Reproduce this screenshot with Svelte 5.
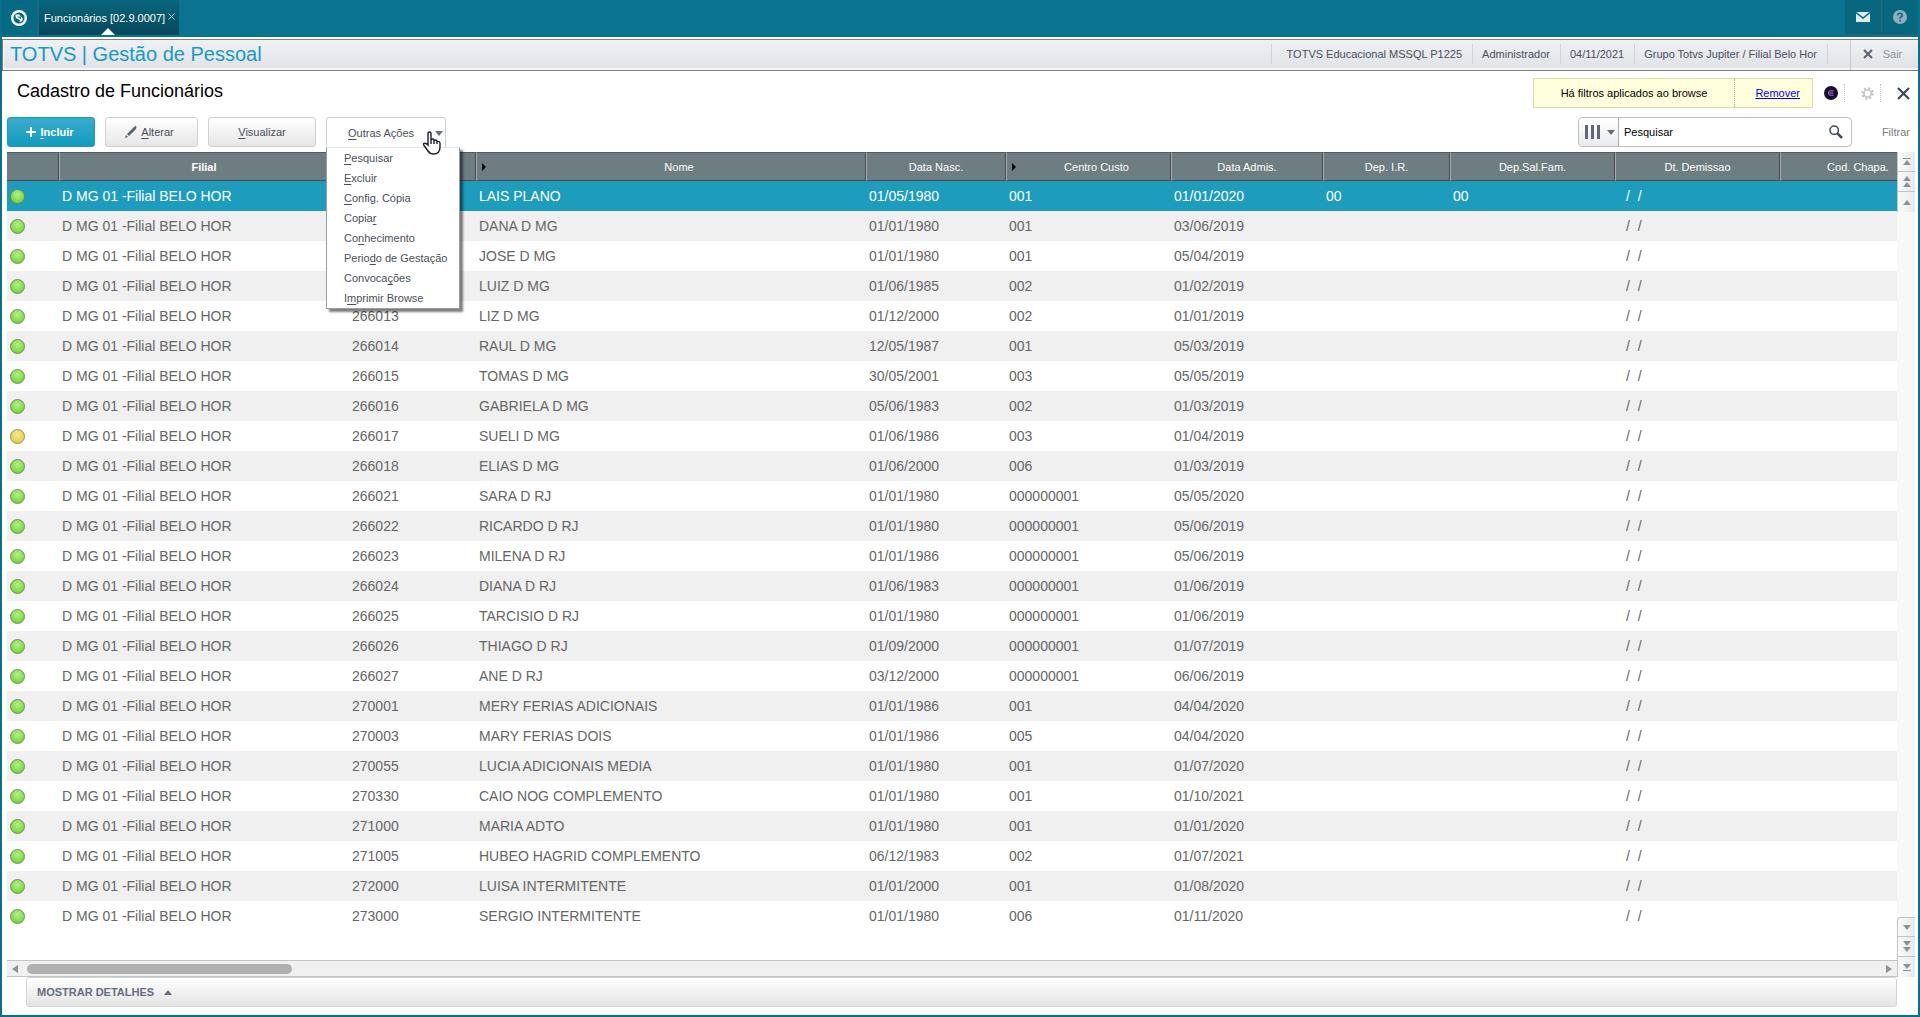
<script>
  const columns = [
    { label: '', key: 'status', width: 52 },
    { label: 'Filial', key: 'filial', width: 290, bold: true },
    { label: '', key: 'matricula', width: 127, mark: true },
    { label: 'Nome', key: 'nome', width: 390, mark: true },
    { label: 'Data Nasc.', key: 'nasc', width: 140 },
    { label: 'Centro Custo', key: 'custo', width: 165, mark: true },
    { label: 'Data Admis.', key: 'admis', width: 152 },
    { label: 'Dep. I.R.', key: 'ir', width: 127 },
    { label: 'Dep.Sal.Fam.', key: 'fam', width: 165 },
    { label: 'Dt. Demissao', key: 'demissao', width: 165 },
    { label: 'Cod. Chapa.', key: 'chapa', width: 117 }
  ];

  const rows = [
    ['', 'LAIS PLANO', '01/05/1980', '001', '01/01/2020', '00', '00'],
    ['', 'DANA D MG', '01/01/1980', '001', '03/06/2019'],
    ['', 'JOSE D MG', '01/01/1980', '001', '05/04/2019'],
    ['', 'LUIZ D MG', '01/06/1985', '002', '01/02/2019'],
    ['266013', 'LIZ D MG', '01/12/2000', '002', '01/01/2019'],
    ['266014', 'RAUL D MG', '12/05/1987', '001', '05/03/2019'],
    ['266015', 'TOMAS D MG', '30/05/2001', '003', '05/05/2019'],
    ['266016', 'GABRIELA D MG', '05/06/1983', '002', '01/03/2019'],
    ['266017', 'SUELI D MG', '01/06/1986', '003', '01/04/2019'],
    ['266018', 'ELIAS D MG', '01/06/2000', '006', '01/03/2019'],
    ['266021', 'SARA D RJ', '01/01/1980', '000000001', '05/05/2020'],
    ['266022', 'RICARDO D RJ', '01/01/1980', '000000001', '05/06/2019'],
    ['266023', 'MILENA D RJ', '01/01/1986', '000000001', '05/06/2019'],
    ['266024', 'DIANA D RJ', '01/06/1983', '000000001', '01/06/2019'],
    ['266025', 'TARCISIO D RJ', '01/01/1980', '000000001', '01/06/2019'],
    ['266026', 'THIAGO D RJ', '01/09/2000', '000000001', '01/07/2019'],
    ['266027', 'ANE D RJ', '03/12/2000', '000000001', '06/06/2019'],
    ['270001', 'MERY FERIAS ADICIONAIS', '01/01/1986', '001', '04/04/2020'],
    ['270003', 'MARY FERIAS DOIS', '01/01/1986', '005', '04/04/2020'],
    ['270055', 'LUCIA ADICIONAIS MEDIA', '01/01/1980', '001', '01/07/2020'],
    ['270330', 'CAIO NOG COMPLEMENTO', '01/01/1980', '001', '01/10/2021'],
    ['271000', 'MARIA ADTO', '01/01/1980', '001', '01/01/2020'],
    ['271005', 'HUBEO HAGRID COMPLEMENTO', '06/12/1983', '002', '01/07/2021'],
    ['272000', 'LUISA INTERMITENTE', '01/01/2000', '001', '01/08/2020'],
    ['273000', 'SERGIO INTERMITENTE', '01/01/1980', '006', '01/11/2020']
  ].map(([matricula, nome, nasc, custo, admis, ir = '', fam = '']) => ({
    filial: 'D MG 01 -Filial BELO HOR',
    matricula, nome, nasc, custo, admis, ir, fam,
    demissao: '/  /',
    chapa: '',
    away: matricula === '266017'
  }));

  // text before the shortcut letter, the letter, text after it
  const actions = [
    ['', 'P', 'esquisar'],
    ['', 'E', 'xcluir'],
    ['', 'C', 'onfig. Cópia'],
    ['Copia', 'r', ''],
    ['Co', 'n', 'hecimento'],
    ['Perio', 'd', 'o de Gestação'],
    ['Convoca', 'ç', 'ões'],
    ['I', 'm', 'primir Browse']
  ];

  const session = ['TOTVS Educacional MSSQL P1225', 'Administrador', '04/11/2021', 'Grupo Totvs Jupiter / Filial Belo Hor'];

  let selected = $state(0);
  let menuOpen = $state(true);
</script>

<div class="app">
  <header class="topbar">
    <button class="home" aria-label="Início">
      <svg width="16" height="16" viewBox="0 0 16 16">
        <circle cx="8" cy="8" r="6.8" fill="none" stroke="#fff" stroke-width="2.4" />
        <path d="M4.4 4.6 L8 4.4 L11.8 8.6 L11.4 11 L8.6 12.2 L8.8 10 L4.8 8 Z" fill="#fff" />
        <path d="M6.6 7 L9.4 7.2 L9.2 8.8" fill="none" stroke="#05687f" stroke-width="1.2" />
      </svg>
    </button>
    <div class="tab">
      <span>Funcionários [02.9.0007]</span>
      <button aria-label="Fechar aba">
        <svg width="7" height="7" viewBox="0 0 7 7"><path d="M.5 .5 L6.5 6.5 M6.5 .5 L.5 6.5" stroke="#a9ccd5" /></svg>
      </button>
      <i class="pointer"></i>
    </div>
    <div class="tools">
      <button aria-label="Mensagens">
        <svg width="14" height="10" viewBox="0 0 14 10">
          <path d="M0 0 H14 V10 H0 Z" fill="#dfeaed" />
          <path d="M0 .5 L7 6 L14 .5" fill="none" stroke="#07677f" stroke-width="1.4" />
        </svg>
      </button>
      <button aria-label="Ajuda">
        <svg width="14" height="14" viewBox="0 0 14 14">
          <circle cx="7" cy="7" r="7" fill="#8fb0ba" />
          <path d="M4.8 5.4 Q4.8 3.3 7 3.3 Q9.2 3.3 9.2 5.2 Q9.2 6.3 7.9 7 Q7 7.4 7 8.6 M7 9.8 V11.4" fill="none" stroke="#07677f" stroke-width="1.6" />
        </svg>
      </button>
    </div>
  </header>

  <section class="titlebar">
    <h1>TOTVS | Gestão de Pessoal</h1>
    <ul>
      {#each session as item}
        <li>{item}</li>
      {/each}
    </ul>
    <button class="exit">
      <svg width="10" height="10" viewBox="0 0 10 10"><path d="M1 1 L9 9 M9 1 L1 9" stroke="#5b6170" stroke-width="2" /></svg>
      Sair
    </button>
  </section>

  <main>
    <div class="heading">
      <h2>Cadastro de Funcionários</h2>
      <div class="notice">
        <span>Há filtros aplicados ao browse</span>
        <a href="#remover">Remover</a>
      </div>
      <div class="corner">
        <button aria-label="Assistente">
          <svg width="14" height="16" viewBox="0 0 14 16">
            <circle cx="7" cy="8" r="7" fill="#1a0b33" />
            <path d="M9.6 5.8 H6 Q4.4 5.8 4.4 8 Q4.4 10.2 6 10.2 H9.6 M5 8 H9.4" fill="none" stroke="#9d7cc0" stroke-width="1" />
          </svg>
        </button>
        <button aria-label="Configurações">
          <svg width="13" height="13" viewBox="0 0 14 14">
            <circle cx="7" cy="7" r="3.9" fill="none" stroke="#bdbdbd" stroke-width="1.6" />
            <circle cx="7" cy="7" r="5.7" fill="none" stroke="#bdbdbd" stroke-width="2" stroke-dasharray="2.2 2.28" />
          </svg>
        </button>
        <button aria-label="Fechar">
          <svg width="13" height="13" viewBox="0 0 13 13"><path d="M1 1 L12 12 M12 1 L1 12" stroke="#3f4757" stroke-width="2.2" /></svg>
        </button>
      </div>
    </div>

    <div class="toolbar">
      <button class="btn primary">
        <svg width="10" height="10" viewBox="0 0 10 10"><path d="M5 0 V10 M0 5 H10" stroke="#fff" stroke-width="2" /></svg>
        <span><u>I</u>ncluir</span>
      </button>
      <button class="btn edit">
        <svg width="12" height="12" viewBox="0 0 12 12"><path d="M0 12 L1 9 L3 11 Z M2 8 L9 1 Q10 0 11 0 Q12 1 11 3 L4 10 Z" fill="#5b6170" /></svg>
        <span><u>A</u>lterar</span>
      </button>
      <button class="btn view"><span><u>V</u>isualizar</span></button>
      <div class="dropdown">
        <button class="btn more" aria-expanded={menuOpen} onclick={() => (menuOpen = !menuOpen)}>
          <span><u>O</u>utras Ações</span>
          <i class="arrow down"></i>
        </button>
        <svg class="cursor" width="19" height="24" viewBox="0 0 19 24">
          <path d="M6 14 V3 Q6 1 7.5 1 Q9 1 9 3 V9 Q9.5 8 10.7 8 Q12 8 12 9.5 Q12.5 9 13.5 9 Q15 9 15 10.5 Q18 10 18 12.5 V16 Q18 23 11.5 23 Q8 23 6 20 L2 14.5 Q1 13 2 12.5 Q3.5 11.5 6 14 Z M9 9 V13 M12 9.5 V13 M15 10.5 V13" fill="#fff" stroke="#1c1c2c" stroke-width="1.4" />
        </svg>
        {#if menuOpen}
          <ul class="menu">
            {#each actions as [before, letter, after]}
              <li><button>{before}<u>{letter}</u>{after}</button></li>
            {/each}
          </ul>
        {/if}
      </div>
      <div class="search">
        <button class="fields" aria-label="Campos da pesquisa">
          <svg width="15" height="14" viewBox="0 0 15 14"><path d="M1.5 0 V14 M7.5 0 V14 M13.5 0 V14" stroke="#5f6778" stroke-width="3" /></svg>
          <i class="arrow down"></i>
        </button>
        <input type="text" aria-label="Pesquisar" value="Pesquisar" />
        <button class="lens" aria-label="Buscar">
          <svg width="14" height="14" viewBox="0 0 14 14">
            <circle cx="5.2" cy="5.2" r="4.2" fill="none" stroke="#454d5d" stroke-width="1.6" />
            <path d="M8.4 8.4 L13 13" stroke="#454d5d" stroke-width="2.6" />
          </svg>
        </button>
      </div>
      <button class="filter">Filtrar</button>
    </div>

    <div class="browse">
      <div class="grid">
        <table>
          <colgroup>
            {#each columns as col}
              <col style:width="{(col.width / 1890) * 100}%" />
            {/each}
          </colgroup>
          <thead>
            <tr>
              {#each columns as col}
                <th class:bold={col.bold} class:marked={col.mark}>
                  {#if col.mark}<i class="mark"></i>{/if}{col.label}
                </th>
              {/each}
            </tr>
          </thead>
          <tbody>
            {#each rows as row, i}
              <tr class:selected={selected === i} onclick={() => (selected = i)}>
                {#each columns as col}
                  {#if col.key === 'status'}
                    <td class="status"><i class="ball" class:away={row.away}></i></td>
                  {:else}
                    <td class={col.key}>{row[col.key]}</td>
                  {/if}
                {/each}
              </tr>
            {/each}
          </tbody>
        </table>
        <div class="hscroll">
          <button aria-label="Rolar à esquerda"><i class="arrow left"></i></button>
          <div class="track"><div class="thumb"></div></div>
          <button aria-label="Rolar à direita"><i class="arrow right"></i></button>
        </div>
      </div>
      <div class="vscroll">
        <button aria-label="Primeiro registro"><i class="line"></i><i class="arrow up"></i></button>
        <button aria-label="Página anterior"><i class="arrow up"></i><i class="arrow up"></i></button>
        <button class="last" aria-label="Registro anterior"><i class="arrow up"></i></button>
        <div class="gap"></div>
        <button class="first" aria-label="Próximo registro"><i class="arrow down"></i></button>
        <button aria-label="Próxima página"><i class="arrow down"></i><i class="arrow down"></i></button>
        <button class="last" aria-label="Último registro"><i class="arrow down"></i><i class="line"></i></button>
      </div>
    </div>

    <button class="details">MOSTRAR DETALHES <i class="arrow up"></i></button>
  </main>
</div>

<style>
  :global(body) {
    margin: 0;
    background: #fff;
  }

  .app, .app * {
    box-sizing: border-box;
  }

  .app {
    display: flex;
    flex-direction: column;
    min-height: 100vh;
    border: 2px solid #08728e;
    border-top: 0;
    background: #fff;
    color: #4a4f5c;
    font: 11px/14px "Liberation Sans", Arial, sans-serif;
  }

  button, input {
    font: inherit;
    color: inherit;
    padding: 0;
    margin: 0;
    border: 0;
    background: none;
  }

  button {
    display: flex;
    align-items: center;
    justify-content: center;
    cursor: pointer;
  }

  h1, h2, ul {
    margin: 0;
    padding: 0;
    font-weight: normal;
    list-style: none;
  }

  svg, i {
    display: block;
    flex: none;
  }

  u {
    text-underline-offset: 2px;
  }

  /* triangles */
  .arrow {
    width: 0;
    height: 0;
    border: 0 solid transparent;
  }

  .arrow.up {
    border-width: 0 4px 5px;
    border-bottom-color: #8e9297;
  }

  .arrow.down {
    border-width: 5px 4px 0;
    border-top-color: #8e9297;
  }

  .arrow.left {
    border-width: 4px 6px 4px 0;
    border-right-color: #8e9297;
  }

  .arrow.right {
    border-width: 4px 0 4px 6px;
    border-left-color: #8e9297;
  }

  /* top bar */
  .topbar {
    display: flex;
    height: 37px;
    padding-bottom: 2px;
    background: #0a738f;
  }

  .home {
    width: 36px;
    padding-right: 1px;
    background: #076a84;
    border-right: 1px solid #2b6276;
  }

  .tab {
    position: relative;
    display: flex;
    align-items: center;
    width: 140px;
    margin-left: 1px;
    padding: 0 4px 0 5px;
    justify-content: space-between;
    color: #fff;
    background: linear-gradient(#07657d, #06495a);
  }

  .tab button {
    height: 14px;
    align-items: flex-start;
    padding-top: 2px;
  }

  .pointer {
    position: absolute;
    left: 62px;
    bottom: 0;
    border: 7px solid transparent;
    border-top: 0;
    border-bottom-color: #fff;
  }

  .tools {
    display: flex;
    margin-left: auto;
  }

  .tools button {
    width: 37px;
    background: #07677f;
    border-right: 1px solid #2b6276;
    border-bottom: 1px solid #2b6276;
  }

  .tools button:last-child {
    width: 36px;
    border-right: 0;
  }

  /* title bar */
  .titlebar {
    display: flex;
    height: 32px;
    margin-top: 2px;
    border: 1px solid #808080;
    border-right: 0;
    background: linear-gradient(#f0f1f3, #dfe2e7);
    box-shadow: inset 1px -2px #f6f6f6;
  }

  h1 {
    padding-left: 7px;
    color: #159bbf;
    font-size: 20px;
    line-height: 28px;
  }

  .titlebar ul {
    display: flex;
    align-items: center;
    margin-left: auto;
    padding-bottom: 2px;
  }

  .titlebar li {
    padding: 3px 10px 3px 9px;
    border-left: 1px solid #cfd2d6;
  }

  .titlebar li:first-child {
    padding-left: 15px;
  }

  .titlebar li:last-child {
    border-right: 1px solid #cfd2d6;
  }

  .exit {
    width: 68px;
    margin-left: 22px;
    padding: 0 4px 2px 0;
    gap: 10px;
    color: #8f949b;
    border-left: 1px solid #c8cbd0;
  }

  /* page */
  main {
    display: flex;
    flex-direction: column;
    flex: 1;
    padding: 0 3px 8px 5px;
  }

  .heading {
    display: flex;
    align-items: center;
    height: 46px;
    padding: 0 5px 0 10px;
  }

  h2 {
    color: #000;
    font-size: 18px;
    line-height: 22px;
    margin-bottom: 6px;
  }

  .notice {
    display: flex;
    align-items: center;
    height: 30px;
    margin-left: auto;
    margin-bottom: 2px;
    color: #000;
    background: #ffffdd;
    border: 1px solid #dcdca8;
  }

  .notice span {
    padding: 7px 27px;
  }

  .notice a {
    padding: 7px 12px 7px 20px;
    color: #00f;
    border-left: 1px dotted #b4b4a0;
  }

  .corner {
    display: flex;
    align-items: center;
    margin-bottom: 2px;
  }

  .corner button {
    height: 18px;
    justify-content: flex-end;
  }

  .corner button:first-child {
    padding: 0 6px 0 11px;
  }

  .corner button:nth-child(2) {
    padding: 0 6px 0 16px;
    border: 1px dotted #c8c8c8;
    border-width: 0 1px;
  }

  .corner button:last-child {
    padding-left: 16px;
  }

  .toolbar {
    display: flex;
    height: 35px;
    padding-right: 5px;
  }

  .btn {
    height: 30px;
    margin-right: 10px;
    border: 1px solid #cfd1d3;
    border-radius: 3px;
    background: linear-gradient(#fff, #e6e6e6);
  }

  .btn.primary {
    width: 88px;
    padding-right: 2px;
    gap: 4px;
    color: #fff;
    font-weight: bold;
    background: linear-gradient(#3aaccb, #129bbf);
    border-color: #1a9bbd;
  }

  .btn.edit {
    width: 93px;
    padding-right: 4px;
    gap: 4px;
  }

  .btn.view {
    width: 108px;
  }

  .dropdown {
    position: relative;
  }

  .btn.more {
    width: 120px;
    height: 31px;
    margin: 0;
    padding: 0 2px 0 21px;
    justify-content: space-between;
    background: #fff;
    border-bottom: 0;
    border-radius: 3px 3px 0 0;
  }

  .btn.more .arrow, .fields .arrow {
    border-top-color: #666e7e;
  }

  .cursor {
    position: absolute;
    left: 96px;
    top: 14px;
    z-index: 3;
    pointer-events: none;
  }

  .menu {
    position: absolute;
    top: 30px;
    left: 0;
    z-index: 2;
    width: 134px;
    background: #fff;
    border: 1px solid #9a9da2;
    border-top-color: #e4e4e4;
    box-shadow: 3px 3px 2px rgba(0, 0, 0, .5);
  }

  .menu button {
    width: 100%;
    height: 20px;
    padding-left: 17px;
    justify-content: flex-start;
    white-space: pre;
  }

  .search {
    display: flex;
    width: 274px;
    height: 30px;
    margin-left: auto;
    border: 1px solid #b9c0bf;
    border-radius: 4px;
  }

  .fields {
    width: 40px;
    padding-left: 2px;
    gap: 7px;
    background: linear-gradient(#fff, #e9ebee);
    border-right: 1px solid #a9adb2;
    border-radius: 4px 0 0 4px;
  }

  .search input {
    flex: 1;
    min-width: 0;
    padding-left: 5px;
    color: #000;
    outline: none;
  }

  .lens {
    width: 30px;
  }

  .filter {
    width: 58px;
    height: 30px;
    justify-content: flex-end;
    color: #7d7d7d;
  }

  /* browse */
  .browse {
    display: flex;
    flex: 1;
  }

  .grid {
    display: flex;
    flex-direction: column;
    flex: 1;
    min-width: 0;
  }

  table {
    width: 100%;
    table-layout: fixed;
    border-collapse: separate;
    border-spacing: 0;
  }

  th {
    position: relative;
    height: 29px;
    padding: 0;
    color: #fff;
    font-weight: normal;
    background: #6e7d81;
    border-top: 1px solid #555c5e;
    border-bottom: 1px solid #4a4d4e;
    border-left: 1px solid #a5adaf;
    border-right: 1px solid #484b4d;
  }

  th:first-child {
    border-left: 0;
  }

  th:last-child {
    padding-left: 38px;
    border-right: 0;
  }

  th.bold {
    font-weight: bold;
  }

  th.marked {
    padding-left: 16px;
  }

  .mark {
    position: absolute;
    left: 5px;
    top: 10px;
    border: 4px solid transparent;
    border-left-color: #000;
    border-right: 0;
  }

  td {
    height: 30px;
    padding: 0 3px;
    color: #666;
    font-size: 14px;
    line-height: 16px;
    white-space: pre;
  }

  td.demissao {
    padding-left: 11px;
  }

  tbody tr:nth-child(even) td {
    background: #f0f0f0;
  }

  tbody tr.selected td {
    color: #fff;
    background: #1d9cbe;
  }

  .ball {
    width: 15px;
    height: 15px;
    border: 1px solid #6f8a60;
    border-radius: 50%;
    background: radial-gradient(circle at 50% 35%, #b4f08a, #85e04a 55%, #62cc22);
  }

  .ball.away {
    border-color: #8f8a6c;
    background: radial-gradient(circle at 50% 35%, #f4e890, #e8d850 55%, #dcc63a);
  }

  .hscroll {
    display: flex;
    height: 17px;
    margin-top: auto;
    background: #f0f0f0;
    border: 1px solid #bfc4c4;
    border-width: 1px 0;
  }

  .hscroll button {
    width: 16px;
  }

  .track {
    flex: 1;
    display: flex;
    align-items: center;
    padding: 0 4px;
  }

  .thumb {
    width: 14.3%;
    height: 10px;
    border-radius: 5px;
    background: #b0b0b0;
  }

  .vscroll {
    display: flex;
    flex-direction: column;
    width: 18px;
    background: #f8f8f8;
  }

  .vscroll button {
    flex-direction: column;
    height: 20px;
    gap: 1px;
    border-left: 1px solid #bfc4c4;
    border-bottom: 1px solid #bfc4c4;
    background: linear-gradient(to right, #fafafa, #e8e9ec);
  }

  .vscroll .last {
    border-bottom: 0;
  }

  .vscroll .first {
    border-top: 1px solid #bfc4c4;
    border-top-left-radius: 4px;
  }

  .vscroll .gap {
    flex: 1;
  }

  .line {
    width: 8px;
    height: 1px;
    background: #8e9297;
  }

  .details {
    height: 30px;
    margin: 0 18px 0 19px;
    padding-left: 10px;
    gap: 10px;
    justify-content: flex-start;
    color: #666e7e;
    font-weight: bold;
    border: 1px solid #d4d6d6;
    border-radius: 3px;
    background: linear-gradient(#fff, #e4e4e4);
  }

  .details .arrow {
    border-bottom-color: #666e7e;
  }
</style>
